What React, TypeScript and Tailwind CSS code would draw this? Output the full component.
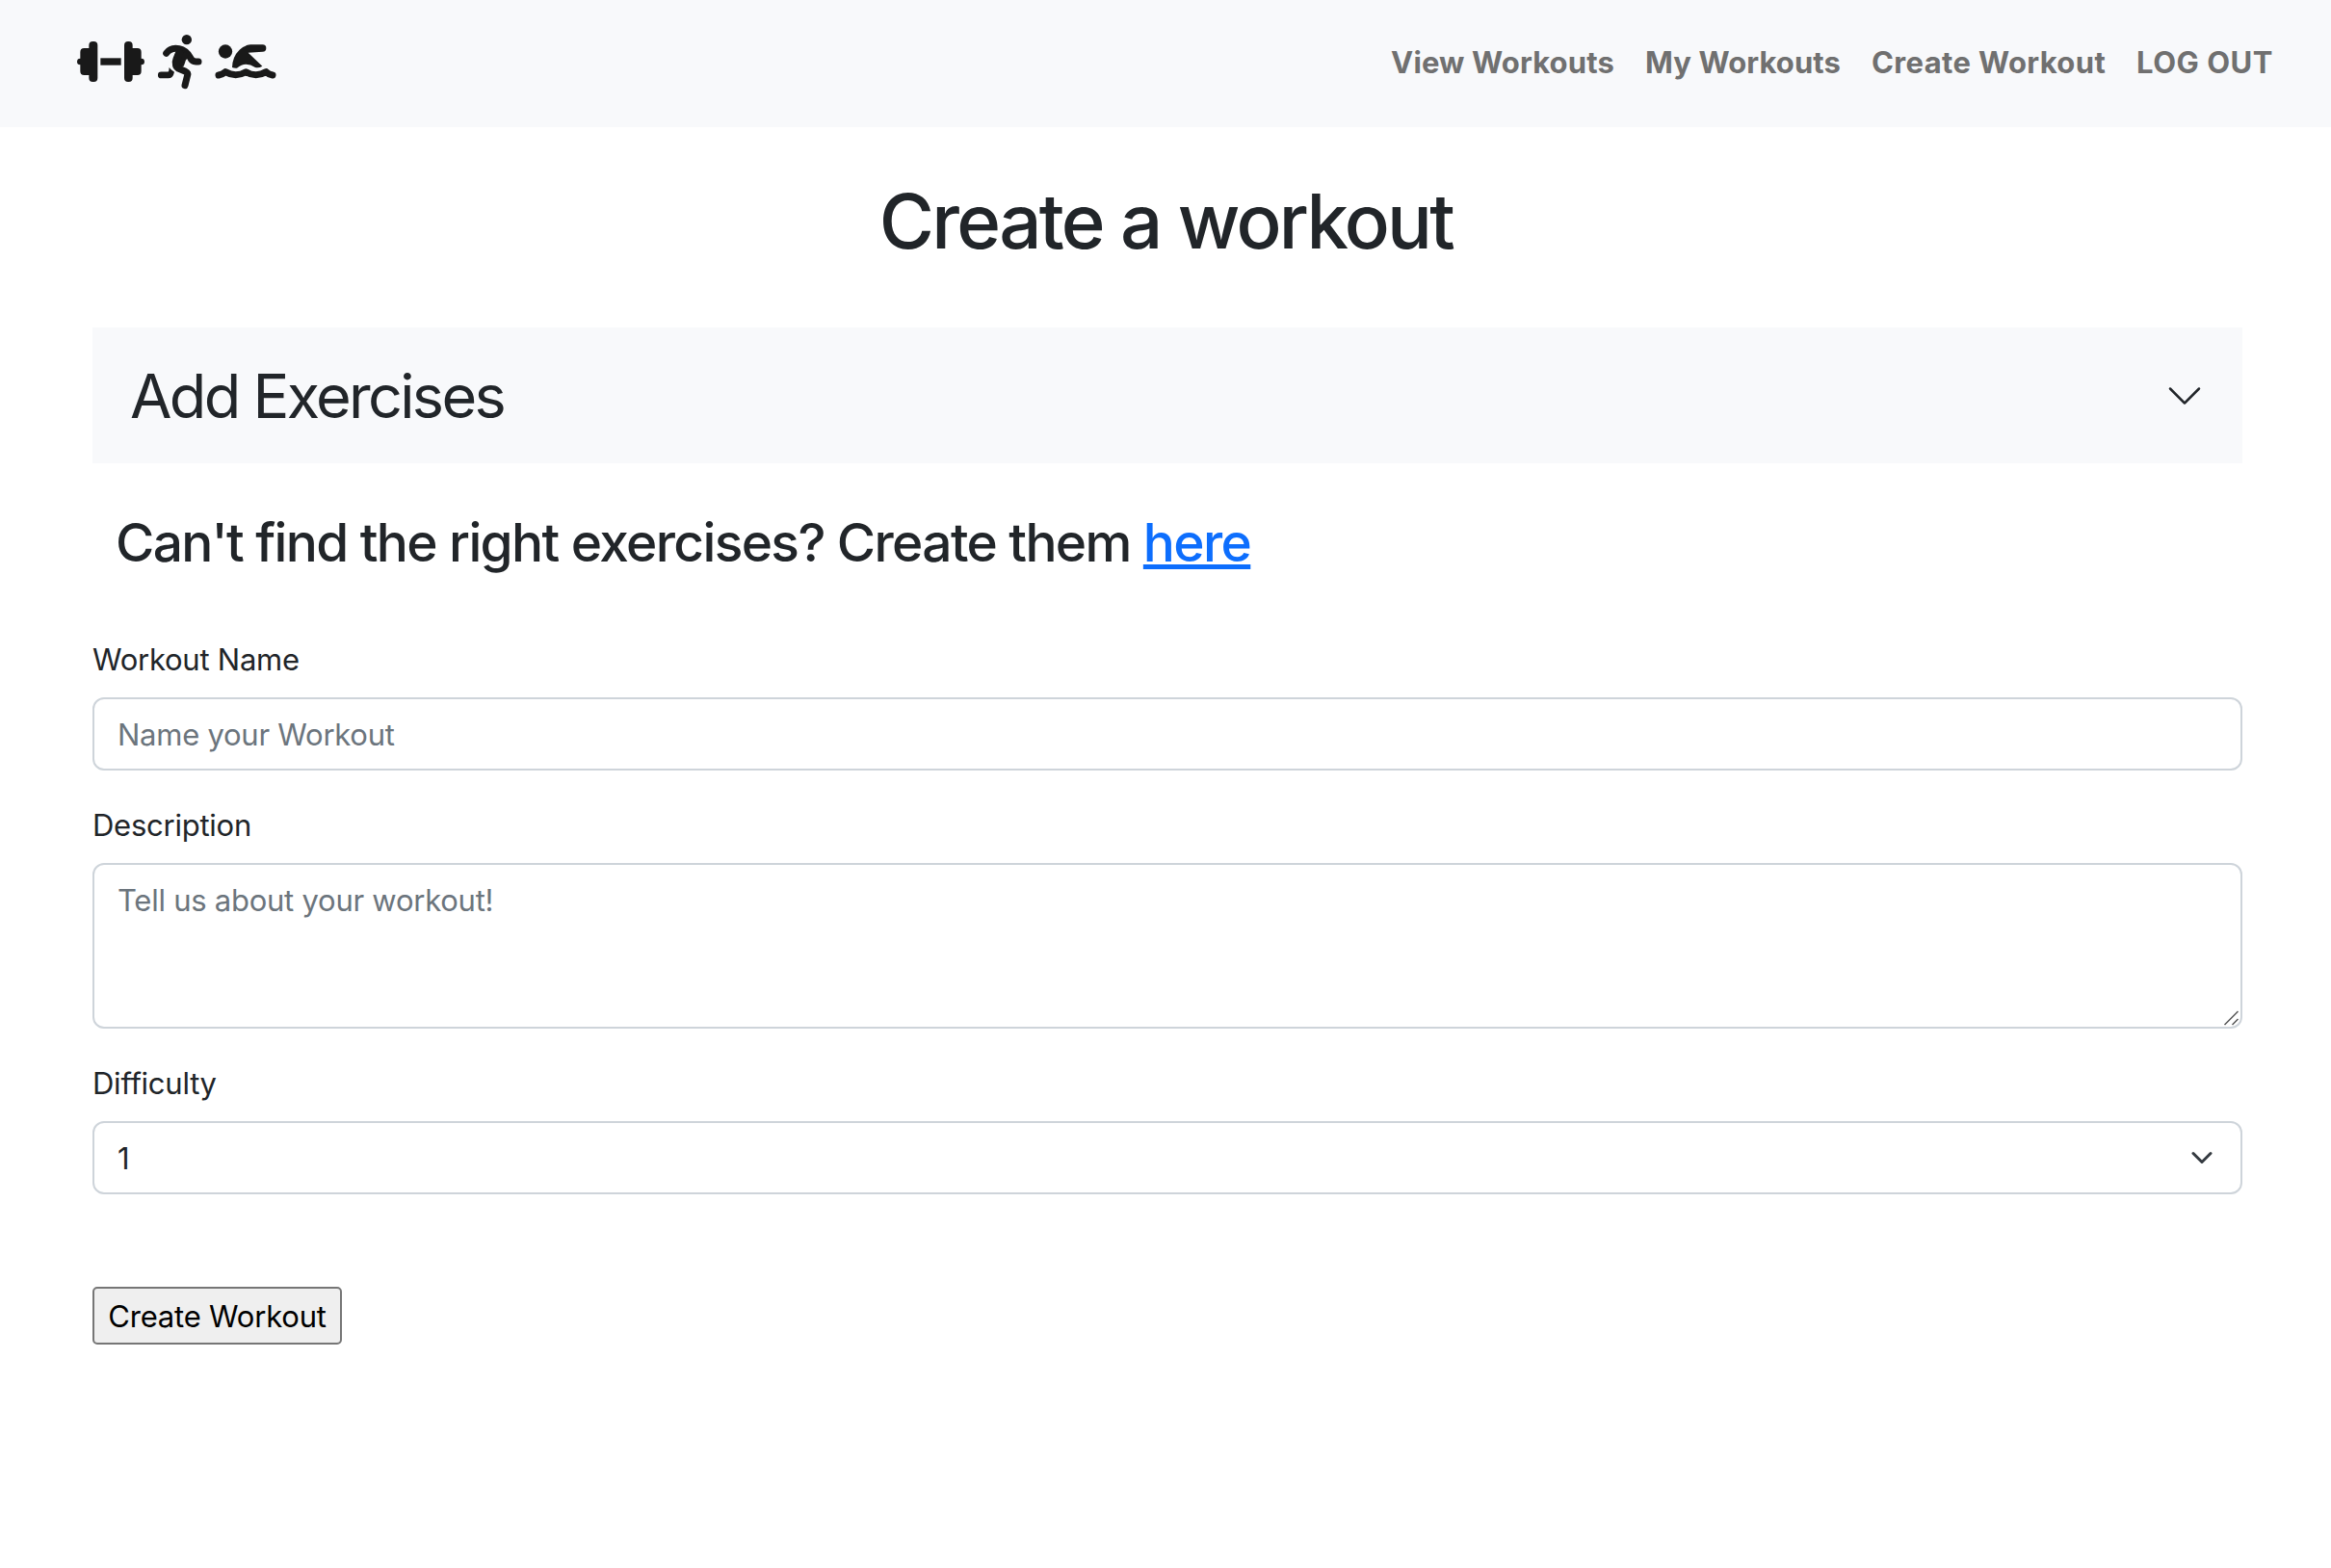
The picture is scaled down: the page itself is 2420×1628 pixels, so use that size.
import React from "react";

function SportsLogo() {
  return (
    <svg width="208" height="58" viewBox="60 45 624 174" fill="#191919" stroke="#191919" strokeLinecap="round" strokeLinejoin="round">
      {/* barbell */}
      <g stroke="none">
        <path d="M97 81a12 12 0 0 1 12-12h3a12 12 0 0 1 12 12v102a12 12 0 0 1-12 12h-3a12 12 0 0 1-12-12v-9H82a12 12 0 0 1-12-12v-20a10 10 0 0 1 0-20v-20a12 12 0 0 1 12-12h15z" />
        <path d="M233 81a12 12 0 0 0-12-12h-2a12 12 0 0 0-12 12v102a12 12 0 0 0 12 12h2a12 12 0 0 0 12-12v-9h15a12 12 0 0 0 12-12v-20a10 10 0 0 0 0-20v-20a12 12 0 0 0-12-12h-15z" />
        <rect x="133" y="121" width="64" height="22" />
      </g>
      {/* runner */}
      <g>
        <circle cx="401.500" cy="63.500" r="15.500" stroke="none" />
        <path d="M338 106C347 93 358 88 378 92C396 96 403 103 411 117Q418 132 430 132H438" fill="none" strokeWidth="21" />
        <path d="M371 96L401 103L406 117L397 126L391 144L369 148L359 142Q356 134 361 121Z" strokeWidth="4" />
        <path d="M380 105L368 139Q366 147 375 153L398 163Q406 167 404 174L396 206" fill="none" strokeWidth="21" />
        <path d="M322 163.500H343Q346 163 346 159L347 150Q352 158 363 164Q359 184 344 184H322A10 10 0 0 1 322 163.500Z" stroke="none" />
      </g>
      {/* swimmer */}
      <g>
        <circle cx="522" cy="100.500" r="21.500" stroke="none" />
        <path d="M638 79A10.500 10.500 0 0 1 638 101L593 104L637 146Q626 153 615 150Q600 140 586 140Q572 140 558 152Q550 153 543 150Q544 116 566 95Q580 81 600 79Z" stroke="none" />
        <path d="M501 174Q512 172 522 164Q538 173 554 173Q571 173 586 164Q601 173 617 173Q633 173 649 164Q657 172 669 174" fill="none" strokeWidth="21" />
      </g>
    </svg>
  );
}

const fieldClass =
  "block w-full rounded-[12px] border-2 border-[#ced4da] bg-white px-6 text-[31px] leading-[48px] tracking-[-0.25px] outline-none placeholder:text-[#6c757d] placeholder:opacity-100";
const labelClass = "mb-[15px] block pt-px text-[31px] leading-[48px] tracking-[-0.25px]";

export default function App() {
  return (
    <div className="min-h-[1628px] w-full bg-white font-['Inter',sans-serif] text-[#212529]">
      <header className="flex h-[132px] items-start justify-between bg-[#f8f9fb] pl-20 pr-[60px]">
        <a href="#" className="mt-[35px] block" aria-label="Home">
          <SportsLogo />
        </a>
        <nav className="mt-[41px] flex gap-8 text-[31px] leading-[48px] font-bold text-[#707070]">
          <a href="#" className="tracking-[0.13px]">View Workouts</a>
          <a href="#" className="tracking-[0.1px]">My Workouts</a>
          <a href="#" className="tracking-[0.35px]">Create Workout</a>
          <a href="#" className="tracking-[0.5px]">LOG OUT</a>
        </nav>
      </header>
      <main className="pl-24 pr-[92px]">
        <h1 className="pt-[50px] pr-[3px] text-center text-[78px] leading-[96px] font-medium tracking-[-2.7px]">Create a workout</h1>
        <button className="mt-[62px] flex h-[141px] w-full items-center justify-between bg-[#f8f9fb] px-10 text-left">
          <span className="-ml-px pt-[2px] text-[63px] leading-[77px] tracking-[-2.7px]">Add Exercises</span>
          <svg width="40" height="40" viewBox="0 0 16 16" fill="#212529">
            <path fillRule="evenodd" d="M1.646 4.646a.5.5 0 0 1 .708 0L8 10.293l5.646-5.647a.5.5 0 0 1 .708.708l-6 6a.5.5 0 0 1-.708 0l-6-6a.5.5 0 0 1 0-.708z" />
          </svg>
        </button>
        <h2 className="mt-[48px] px-6 text-[55px] leading-[68px] font-medium tracking-[-1.62px]">
          Can't find the right exercises? Create them{" "}
          <a href="#" className="text-[#0d6efd] underline decoration-[5px] underline-offset-[3px] [text-decoration-skip-ink:none]">here</a>
        </h2>
        <form className="mt-[63px]">
          <label className={labelClass}>Workout Name</label>
          <input className={`${fieldClass} h-[76px] pt-px`} placeholder="Name your Workout" />
          <label className={`${labelClass} mt-8`}>Description</label>
          <div className="relative">
            <textarea className={`${fieldClass} h-[172px] resize-none pt-[13px]`} placeholder="Tell us about your workout!" />
            <svg className="absolute right-[4px] bottom-[3px]" width="16" height="16" viewBox="0 0 16 16" stroke="#555" strokeWidth="1.500">
              <path d="M1.500 15L15.500 1M9.500 15L15.500 9" />
            </svg>
          </div>
          <label className={`${labelClass} mt-8`}>Difficulty</label>
          <div className="relative">
            <select className={`${fieldClass} h-[76px] appearance-none pt-[2px]`} defaultValue="1">
              <option>1</option>
            </select>
            <svg className="absolute top-[26px] right-[30px]" width="24" height="24" viewBox="0 0 16 16" fill="none" stroke="#343a40" strokeWidth="2" strokeLinecap="round" strokeLinejoin="round">
              <path d="m2 5 6 6 6-6" />
            </svg>
          </div>
          <button type="button" className="mt-24 flex h-[60px] w-[259px] items-center justify-center rounded-[5px] border-2 border-[#767676] bg-[#efefef] pt-[2px] text-[31px] leading-[48px] tracking-[-0.2px] text-black">
            Create Workout
          </button>
        </form>
      </main>
    </div>
  );
}
